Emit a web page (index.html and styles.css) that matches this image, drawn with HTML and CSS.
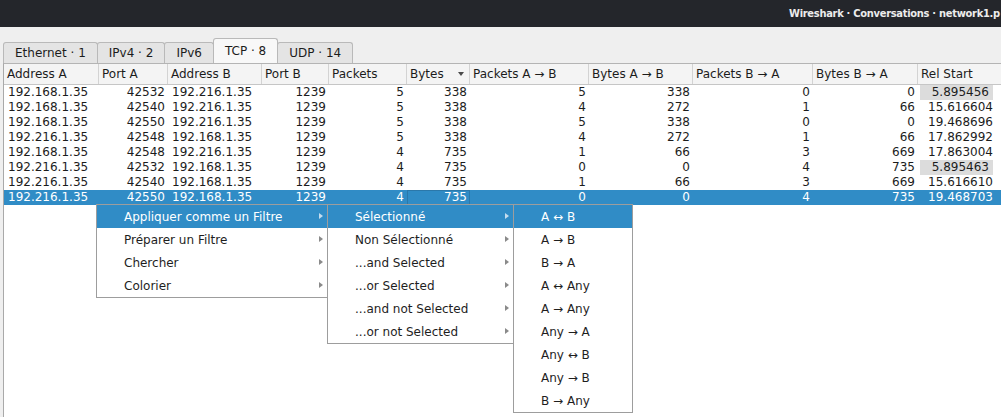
FILE: index.html
```html
<!DOCTYPE html>
<html>
<head>
<meta charset="utf-8">
<link rel="stylesheet" href="styles.css">
</head>
<body>
<div class="titlebar"><span class="title">Wireshark · Conversations · network1.p</span></div>
<div class="tabs">
  <div class="tab">Ethernet · 1</div>
  <div class="tab">IPv4 · 2</div>
  <div class="tab">IPv6</div>
  <div class="tab active">TCP · 8</div>
  <div class="tab">UDP · 14</div>
</div>
<div class="view">
  <div class="head">
    <div>Address A</div><div>Port A</div><div>Address B</div><div>Port B</div><div>Packets</div>
    <div class="sorted"><span>Bytes</span><i class="sort"></i></div>
    <div>Packets A → B</div><div>Bytes A → B</div><div>Packets B → A</div><div>Bytes B → A</div><div class="last">Rel Start</div>
  </div>
  <div class="row"><div>192.168.1.35</div><div class="n">42532</div><div>192.216.1.35</div><div class="n">1239</div><div class="n">5</div><div class="n">338</div><div class="n">5</div><div class="n">338</div><div class="n">0</div><div class="n">0</div><div class="n last hl"><span>5.895456</span></div></div>
  <div class="row"><div>192.168.1.35</div><div class="n">42540</div><div>192.216.1.35</div><div class="n">1239</div><div class="n">5</div><div class="n">338</div><div class="n">4</div><div class="n">272</div><div class="n">1</div><div class="n">66</div><div class="n last">15.616604</div></div>
  <div class="row"><div>192.168.1.35</div><div class="n">42550</div><div>192.216.1.35</div><div class="n">1239</div><div class="n">5</div><div class="n">338</div><div class="n">5</div><div class="n">338</div><div class="n">0</div><div class="n">0</div><div class="n last">19.468696</div></div>
  <div class="row"><div>192.216.1.35</div><div class="n">42548</div><div>192.168.1.35</div><div class="n">1239</div><div class="n">5</div><div class="n">338</div><div class="n">4</div><div class="n">272</div><div class="n">1</div><div class="n">66</div><div class="n last">17.862992</div></div>
  <div class="row"><div>192.168.1.35</div><div class="n">42548</div><div>192.216.1.35</div><div class="n">1239</div><div class="n">4</div><div class="n">735</div><div class="n">1</div><div class="n">66</div><div class="n">3</div><div class="n">669</div><div class="n last">17.863004</div></div>
  <div class="row"><div>192.216.1.35</div><div class="n">42532</div><div>192.168.1.35</div><div class="n">1239</div><div class="n">4</div><div class="n">735</div><div class="n">0</div><div class="n">0</div><div class="n">4</div><div class="n">735</div><div class="n last hl"><span>5.895463</span></div></div>
  <div class="row"><div>192.216.1.35</div><div class="n">42540</div><div>192.168.1.35</div><div class="n">1239</div><div class="n">4</div><div class="n">735</div><div class="n">1</div><div class="n">66</div><div class="n">3</div><div class="n">669</div><div class="n last">15.616610</div></div>
  <div class="row sel"><div>192.216.1.35</div><div class="n">42550</div><div>192.168.1.35</div><div class="n">1239</div><div class="n">4</div><div class="n focus">735</div><div class="n">0</div><div class="n">0</div><div class="n">4</div><div class="n">735</div><div class="n last">19.468703</div></div>
</div>

<div class="menu m1">
  <div class="item on">Appliquer comme un Filtre<i class="arrow"></i></div>
  <div class="item">Préparer un Filtre<i class="arrow"></i></div>
  <div class="item">Chercher<i class="arrow"></i></div>
  <div class="item">Colorier<i class="arrow"></i></div>
</div>
<div class="menu m2">
  <div class="item on">Sélectionné<i class="arrow"></i></div>
  <div class="item">Non Sélectionné<i class="arrow"></i></div>
  <div class="item">...and Selected<i class="arrow"></i></div>
  <div class="item">...or Selected<i class="arrow"></i></div>
  <div class="item">...and not Selected<i class="arrow"></i></div>
  <div class="item">...or not Selected<i class="arrow"></i></div>
</div>
<div class="menu m3">
  <div class="item on">A ↔ B</div>
  <div class="item">A → B</div>
  <div class="item">B → A</div>
  <div class="item">A ↔ Any</div>
  <div class="item">A → Any</div>
  <div class="item">Any → A</div>
  <div class="item">Any ↔ B</div>
  <div class="item">Any → B</div>
  <div class="item">B → Any</div>
</div>
</body>
</html>
```
FILE: styles.css
```css
* { box-sizing: border-box; }
html, body { margin: 0; }
body {
  width: 1001px;
  height: 417px;
  overflow: hidden;
  position: relative;
  background: #efefef;
  font: 12px "DejaVu Sans", sans-serif;
  color: #1c1c1c;
}
.titlebar {
  height: 27px;
  background: #24262b;
  color: #ececec;
  display: flex;
  align-items: center;
  padding-left: 789px;
  white-space: nowrap;
  overflow: hidden;
}
.title {
  font: bold 11px "DejaVu Sans Condensed", "DejaVu Sans", sans-serif;
  letter-spacing: -0.28px;
}
.tabs {
  display: flex;
  align-items: flex-end;
  height: 25px;
  margin-top: 11px;
  padding-left: 3px;
}
.tab {
  height: 21px;
  line-height: 20px;
  padding: 0 11px;
  border: 1px solid #b9b9b9;
  border-bottom: none;
  border-radius: 3px 3px 0 0;
  background: #e4e4e4;
  margin-right: -1px;
  white-space: nowrap;
}
.tab.active {
  height: 25px;
  line-height: 24px;
  background: #f8f8f8;
  position: relative;
  z-index: 1;
}
.view {
  margin-left: 3px;
  height: 354px;
  border-left: 1px solid #a9a9a9;
  border-top: 1px solid #b4b4b4;
  background: #fff;
}
.head, .row {
  display: grid;
  grid-template-columns: 95px 69px 94px 67px 78px 63px 119px 104px 120px 105px 1fr;
}
.head {
  height: 21px;
  background: #f4f4f4;
  border-bottom: 1px solid #c6c6c6;
}
.head > div {
  line-height: 20px;
  padding-left: 3px;
  border-right: 1px solid #d3d3d3;
  white-space: nowrap;
  overflow: hidden;
}
.head > div.last { border-right: none; }
.head .sorted {
  display: flex;
  align-items: center;
  justify-content: space-between;
  padding-right: 5px;
}
.sort {
  width: 0;
  height: 0;
  border-top: 4px solid #4a4a4a;
  border-left: 3.5px solid transparent;
  border-right: 3.5px solid transparent;
}
.row {
  height: 15px;
  line-height: 15px;
}
.row > div {
  padding: 0 3px 0 4px;
  white-space: nowrap;
  overflow: hidden;
}
.row > .n { text-align: right; }
.row > .last { padding-right: 8px; }
.row > .hl { padding-left: 0; }
.hl span {
  display: block;
  margin-left: 2px;
  padding-right: 4px;
  background: #dcdcdc;
}
.row.sel {
  background: #308cc6;
  color: #fff;
}
.row > .focus {
  outline: 1px solid #2b78aa;
  outline-offset: -1px;
}
.menu {
  position: absolute;
  top: 204px;
  background: #fff;
  border: 1px solid #9d9d9d;
}
.m1 { left: 96px; width: 232px; }
.m2 { left: 327px; width: 187px; }
.m3 { left: 513px; width: 120px; }
.item {
  position: relative;
  height: 23px;
  display: flex;
  align-items: center;
  padding-left: 27px;
  white-space: nowrap;
  color: #1e1e1e;
}
.item.on {
  background: #308cc6;
  color: #fff;
}
.arrow {
  position: absolute;
  right: 4px;
  top: 8px;
  width: 0;
  height: 0;
  border-left: 4px solid #8a8a8a;
  border-top: 3.5px solid transparent;
  border-bottom: 3.5px solid transparent;
}
.item.on .arrow { border-left-color: #c4dcee; }
```
